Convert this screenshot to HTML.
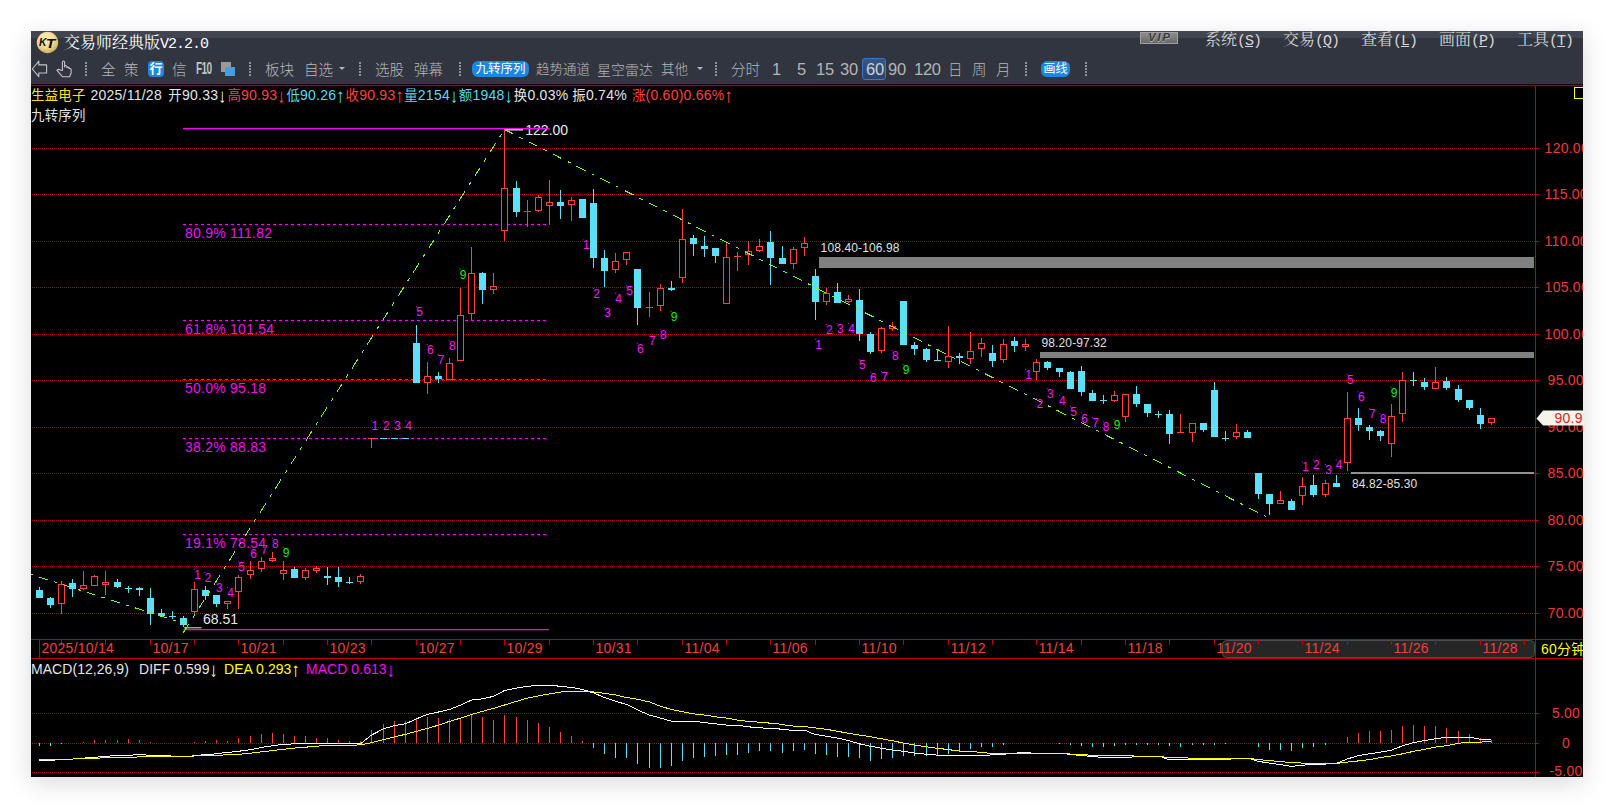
<!DOCTYPE html>
<html lang="zh"><head><meta charset="utf-8"><title>交易师经典版V2.2.0</title>
<style>
html,body{margin:0;padding:0;background:#fff;}
body{width:1614px;height:808px;overflow:hidden;position:relative;font-family:"Liberation Sans","Noto Sans CJK SC",sans-serif;}
#win{position:absolute;left:31px;top:31px;width:1552px;height:746px;background:#000;overflow:hidden;box-shadow:0 6px 24px rgba(0,0,0,.15);}
#title{position:absolute;left:0;top:0;width:100%;height:23px;background:#31353f;}
#title .strip{position:absolute;left:0;top:0;width:100%;height:7px;background:#41454f;}
#tool{position:absolute;left:0;top:23px;width:100%;height:31px;background:#31353f;border-bottom:1px solid #0c0c12;box-sizing:border-box;}
.t{position:absolute;white-space:nowrap;color:#b8b8bc;font-weight:300;font-size:14.5px;line-height:16px;top:31px;}
.n{position:absolute;white-space:nowrap;color:#b4b4b8;font-size:16.5px;letter-spacing:-0.3px;line-height:16px;top:30px;}
.sep{position:absolute;top:31px;width:2px;height:14px;background:repeating-linear-gradient(to bottom,#90909a 0,#90909a 2px,transparent 2px,transparent 3px);}
.pill{position:absolute;background:#1c86e0;border-radius:6px;color:#fff;text-align:center;white-space:nowrap;}
.menu{position:absolute;top:2px;font-family:"Liberation Mono","Noto Serif CJK SC",serif;font-size:16px;line-height:17px;color:#d6d6d6;white-space:nowrap;}
.menu span{font-size:15px;letter-spacing:-1px;}
.menu u{text-decoration:underline;text-underline-offset:1px;}
svg{position:absolute;left:-31px;top:-31px;}
</style></head><body>
<div id="win">
<svg width="1614" height="808" viewBox="0 0 1614 808">
<line x1="32" y1="148.5" x2="1535" y2="148.5" stroke="#c00000" stroke-width="1" stroke-dasharray="1 1"/>
<line x1="32" y1="194.5" x2="1535" y2="194.5" stroke="#c00000" stroke-width="1" stroke-dasharray="1 1"/>
<line x1="32" y1="241.5" x2="1535" y2="241.5" stroke="#c00000" stroke-width="1" stroke-dasharray="1 1"/>
<line x1="32" y1="287.5" x2="1535" y2="287.5" stroke="#c00000" stroke-width="1" stroke-dasharray="1 1"/>
<line x1="32" y1="334.5" x2="1535" y2="334.5" stroke="#c00000" stroke-width="1" stroke-dasharray="1 1"/>
<line x1="32" y1="380.5" x2="1535" y2="380.5" stroke="#c00000" stroke-width="1" stroke-dasharray="1 1"/>
<line x1="32" y1="427.5" x2="1535" y2="427.5" stroke="#c00000" stroke-width="1" stroke-dasharray="1 1"/>
<line x1="32" y1="473.5" x2="1535" y2="473.5" stroke="#c00000" stroke-width="1" stroke-dasharray="1 1"/>
<line x1="32" y1="520.5" x2="1535" y2="520.5" stroke="#c00000" stroke-width="1" stroke-dasharray="1 1"/>
<line x1="32" y1="566.5" x2="1535" y2="566.5" stroke="#c00000" stroke-width="1" stroke-dasharray="1 1"/>
<line x1="32" y1="613.5" x2="1535" y2="613.5" stroke="#c00000" stroke-width="1" stroke-dasharray="1 1"/>
<line x1="32" y1="713.5" x2="1535" y2="713.5" stroke="#c00000" stroke-width="1" stroke-dasharray="1 1"/>
<line x1="32" y1="743.5" x2="1535" y2="743.5" stroke="#c00000" stroke-width="1" stroke-dasharray="1 1"/>
<line x1="32" y1="772.5" x2="1535" y2="772.5" stroke="#c00000" stroke-width="1" stroke-dasharray="1 1"/>
<rect x="819" y="257" width="715" height="11" fill="#808080"/>
<rect x="1040" y="352" width="494" height="6" fill="#808080"/>
<rect x="1351" y="472" width="183" height="2" fill="#909090"/>
<rect x="183.4" y="629" width="365.6" height="1.25" fill="#ff00ff"/>
<line x1="183" y1="224.5" x2="546" y2="224.5" stroke="#ff00ff" stroke-width="1" stroke-dasharray="3 3" shape-rendering="crispEdges"/>
<line x1="183" y1="320.5" x2="546" y2="320.5" stroke="#ff00ff" stroke-width="1" stroke-dasharray="3 3" shape-rendering="crispEdges"/>
<line x1="183" y1="379.5" x2="546" y2="379.5" stroke="#ff00ff" stroke-width="1" stroke-dasharray="3 3" shape-rendering="crispEdges"/>
<line x1="183" y1="438.5" x2="546" y2="438.5" stroke="#ff00ff" stroke-width="1" stroke-dasharray="3 3" shape-rendering="crispEdges"/>
<line x1="183" y1="534.5" x2="546" y2="534.5" stroke="#ff00ff" stroke-width="1" stroke-dasharray="3 3" shape-rendering="crispEdges"/>
<rect x="505" y="129" width="18" height="1.5" fill="#e8e8e8"/>
<rect x="184" y="627.3" width="17.5" height="1" fill="#e8e8e8"/>
<g shape-rendering="crispEdges">
<rect x="39" y="587" width="1" height="11" fill="#5ce0f8"/>
<rect x="36" y="590" width="7" height="8" fill="#5ce0f8"/>
<rect x="50" y="597" width="1" height="11" fill="#5ce0f8"/>
<rect x="47" y="598" width="7" height="7" fill="#5ce0f8"/>
<rect x="61" y="581" width="1" height="3" fill="#ff4040"/>
<rect x="61" y="604" width="1" height="10" fill="#ff4040"/>
<rect x="58.5" y="584.5" width="6" height="19" fill="#000" stroke="#ff4040" stroke-width="1"/>
<rect x="72" y="579" width="1" height="18" fill="#5ce0f8"/>
<rect x="69" y="583" width="7" height="6" fill="#5ce0f8"/>
<rect x="83" y="571" width="1" height="14" fill="#ff4040"/>
<rect x="83" y="589" width="1" height="1" fill="#ff4040"/>
<rect x="80.5" y="585.5" width="6" height="3" fill="#000" stroke="#ff4040" stroke-width="1"/>
<rect x="94" y="575" width="1" height="1" fill="#ff4040"/>
<rect x="91.5" y="576.5" width="6" height="9" fill="#000" stroke="#ff4040" stroke-width="1"/>
<rect x="105" y="571" width="1" height="11" fill="#ff4040"/>
<rect x="105" y="585" width="1" height="10" fill="#ff4040"/>
<rect x="102.5" y="582.5" width="6" height="2" fill="#000" stroke="#ff4040" stroke-width="1"/>
<rect x="117" y="579" width="1" height="9" fill="#5ce0f8"/>
<rect x="114" y="582" width="7" height="5" fill="#5ce0f8"/>
<rect x="128" y="586" width="1" height="7" fill="#5ce0f8"/>
<rect x="125" y="588" width="7" height="1" fill="#5ce0f8"/>
<rect x="139" y="587" width="1" height="9" fill="#5ce0f8"/>
<rect x="136" y="588" width="7" height="2" fill="#5ce0f8"/>
<rect x="150" y="588" width="1" height="37" fill="#5ce0f8"/>
<rect x="147" y="598" width="7" height="16" fill="#5ce0f8"/>
<rect x="161" y="609" width="1" height="7" fill="#5ce0f8"/>
<rect x="158" y="613" width="7" height="3" fill="#5ce0f8"/>
<rect x="172" y="611" width="1" height="8" fill="#5ce0f8"/>
<rect x="169" y="616" width="7" height="1" fill="#5ce0f8"/>
<rect x="183" y="616" width="1" height="11" fill="#5ce0f8"/>
<rect x="180" y="618" width="7" height="7" fill="#5ce0f8"/>
<rect x="194" y="582" width="1" height="7" fill="#ff4040"/>
<rect x="194" y="612" width="1" height="4" fill="#ff4040"/>
<rect x="191.5" y="589.5" width="6" height="22" fill="#000" stroke="#ff4040" stroke-width="1"/>
<rect x="205" y="586" width="1" height="14" fill="#5ce0f8"/>
<rect x="202" y="590" width="7" height="6" fill="#5ce0f8"/>
<rect x="216" y="595" width="1" height="12" fill="#5ce0f8"/>
<rect x="213" y="595" width="7" height="9" fill="#5ce0f8"/>
<rect x="227" y="604" width="1" height="5" fill="#ff4040"/>
<rect x="224.5" y="601.5" width="6" height="2" fill="#000" stroke="#ff4040" stroke-width="1"/>
<rect x="238" y="575" width="1" height="2" fill="#ff4040"/>
<rect x="238" y="592" width="1" height="17" fill="#ff4040"/>
<rect x="235.5" y="577.5" width="6" height="14" fill="#000" stroke="#ff4040" stroke-width="1"/>
<rect x="250" y="561" width="1" height="9" fill="#ff4040"/>
<rect x="250" y="575" width="1" height="4" fill="#ff4040"/>
<rect x="247.5" y="570.5" width="6" height="4" fill="#000" stroke="#ff4040" stroke-width="1"/>
<rect x="261" y="557" width="1" height="4" fill="#ff4040"/>
<rect x="261" y="569" width="1" height="3" fill="#ff4040"/>
<rect x="258.5" y="561.5" width="6" height="7" fill="#000" stroke="#ff4040" stroke-width="1"/>
<rect x="272" y="552" width="1" height="6" fill="#ff4040"/>
<rect x="272" y="561" width="1" height="1" fill="#ff4040"/>
<rect x="269.5" y="558.5" width="6" height="2" fill="#000" stroke="#ff4040" stroke-width="1"/>
<rect x="283" y="561" width="1" height="9" fill="#ff4040"/>
<rect x="283" y="574" width="1" height="6" fill="#ff4040"/>
<rect x="280.5" y="570.5" width="6" height="3" fill="#000" stroke="#ff4040" stroke-width="1"/>
<rect x="294" y="567" width="1" height="11" fill="#5ce0f8"/>
<rect x="291" y="569" width="7" height="9" fill="#5ce0f8"/>
<rect x="305" y="568" width="1" height="2" fill="#ff4040"/>
<rect x="305" y="578" width="1" height="2" fill="#ff4040"/>
<rect x="302.5" y="570.5" width="6" height="7" fill="#000" stroke="#ff4040" stroke-width="1"/>
<rect x="316" y="566" width="1" height="2" fill="#ff4040"/>
<rect x="316" y="571" width="1" height="2" fill="#ff4040"/>
<rect x="313.5" y="568.5" width="6" height="2" fill="#000" stroke="#ff4040" stroke-width="1"/>
<rect x="327" y="567" width="1" height="18" fill="#5ce0f8"/>
<rect x="324" y="576" width="7" height="2" fill="#5ce0f8"/>
<rect x="338" y="567" width="1" height="20" fill="#5ce0f8"/>
<rect x="335" y="577" width="7" height="5" fill="#5ce0f8"/>
<rect x="349" y="577" width="1" height="7" fill="#5ce0f8"/>
<rect x="346" y="582" width="7" height="1" fill="#5ce0f8"/>
<rect x="360" y="574" width="1" height="2" fill="#ff4040"/>
<rect x="360" y="582" width="1" height="2" fill="#ff4040"/>
<rect x="357.5" y="576.5" width="6" height="5" fill="#000" stroke="#ff4040" stroke-width="1"/>
<rect x="371" y="438" width="1" height="10" fill="#ff4040"/>
<rect x="368" y="438" width="7" height="1" fill="#ff4040"/>
<rect x="380" y="438" width="7" height="1" fill="#5ce0f8"/>
<rect x="391" y="438" width="7" height="1" fill="#5ce0f8"/>
<rect x="402" y="438" width="7" height="1" fill="#5ce0f8"/>
<rect x="416" y="325" width="1" height="58" fill="#5ce0f8"/>
<rect x="413" y="343" width="7" height="40" fill="#5ce0f8"/>
<rect x="427" y="362" width="1" height="14" fill="#ff4040"/>
<rect x="427" y="383" width="1" height="11" fill="#ff4040"/>
<rect x="424.5" y="376.5" width="6" height="6" fill="#000" stroke="#ff4040" stroke-width="1"/>
<rect x="438" y="372" width="1" height="11" fill="#5ce0f8"/>
<rect x="435" y="376" width="7" height="3" fill="#5ce0f8"/>
<rect x="449" y="358" width="1" height="5" fill="#ff4040"/>
<rect x="446.5" y="363.5" width="6" height="16" fill="#000" stroke="#ff4040" stroke-width="1"/>
<rect x="460" y="288" width="1" height="27" fill="#ff4040"/>
<rect x="457.5" y="315.5" width="6" height="45" fill="#000" stroke="#ff4040" stroke-width="1"/>
<rect x="471" y="247" width="1" height="26" fill="#ff4040"/>
<rect x="471" y="314" width="1" height="6" fill="#ff4040"/>
<rect x="468.5" y="273.5" width="6" height="40" fill="#000" stroke="#ff4040" stroke-width="1"/>
<rect x="482" y="272" width="1" height="32" fill="#5ce0f8"/>
<rect x="479" y="273" width="7" height="17" fill="#5ce0f8"/>
<rect x="493" y="273" width="1" height="13" fill="#ff4040"/>
<rect x="493" y="290" width="1" height="4" fill="#ff4040"/>
<rect x="490.5" y="286.5" width="6" height="3" fill="#000" stroke="#ff4040" stroke-width="1"/>
<rect x="504" y="129" width="1" height="59" fill="#ff4040"/>
<rect x="504" y="231" width="1" height="10" fill="#ff4040"/>
<rect x="501.5" y="188.5" width="6" height="42" fill="#000" stroke="#ff4040" stroke-width="1"/>
<rect x="516" y="181" width="1" height="36" fill="#5ce0f8"/>
<rect x="513" y="188" width="7" height="24" fill="#5ce0f8"/>
<rect x="527" y="200" width="1" height="27" fill="#ff4040"/>
<rect x="524" y="211" width="7" height="1" fill="#ff4040"/>
<rect x="538" y="195" width="1" height="2" fill="#ff4040"/>
<rect x="538" y="211" width="1" height="1" fill="#ff4040"/>
<rect x="535.5" y="197.5" width="6" height="13" fill="#000" stroke="#ff4040" stroke-width="1"/>
<rect x="549" y="180" width="1" height="22" fill="#ff4040"/>
<rect x="549" y="206" width="1" height="19" fill="#ff4040"/>
<rect x="546.5" y="202.5" width="6" height="3" fill="#000" stroke="#ff4040" stroke-width="1"/>
<rect x="560" y="190" width="1" height="29" fill="#5ce0f8"/>
<rect x="557" y="202" width="7" height="4" fill="#5ce0f8"/>
<rect x="571" y="197" width="1" height="3" fill="#ff4040"/>
<rect x="571" y="205" width="1" height="16" fill="#ff4040"/>
<rect x="568.5" y="200.5" width="6" height="4" fill="#000" stroke="#ff4040" stroke-width="1"/>
<rect x="579" y="199" width="7" height="19" fill="#5ce0f8"/>
<rect x="593" y="189" width="1" height="79" fill="#5ce0f8"/>
<rect x="590" y="203" width="7" height="55" fill="#5ce0f8"/>
<rect x="604" y="250" width="1" height="37" fill="#5ce0f8"/>
<rect x="601" y="258" width="7" height="13" fill="#5ce0f8"/>
<rect x="615" y="253" width="1" height="8" fill="#ff4040"/>
<rect x="615" y="270" width="1" height="3" fill="#ff4040"/>
<rect x="612.5" y="261.5" width="6" height="8" fill="#000" stroke="#ff4040" stroke-width="1"/>
<rect x="626" y="260" width="1" height="5" fill="#ff4040"/>
<rect x="623.5" y="252.5" width="6" height="7" fill="#000" stroke="#ff4040" stroke-width="1"/>
<rect x="637" y="269" width="1" height="56" fill="#5ce0f8"/>
<rect x="634" y="269" width="7" height="39" fill="#5ce0f8"/>
<rect x="649" y="292" width="1" height="25" fill="#ff4040"/>
<rect x="646" y="307" width="7" height="1" fill="#ff4040"/>
<rect x="660" y="284" width="1" height="4" fill="#ff4040"/>
<rect x="660" y="306" width="1" height="5" fill="#ff4040"/>
<rect x="657.5" y="288.5" width="6" height="17" fill="#000" stroke="#ff4040" stroke-width="1"/>
<rect x="671" y="281" width="1" height="10" fill="#5ce0f8"/>
<rect x="668" y="288" width="7" height="2" fill="#5ce0f8"/>
<rect x="682" y="209" width="1" height="30" fill="#ff4040"/>
<rect x="682" y="278" width="1" height="5" fill="#ff4040"/>
<rect x="679.5" y="239.5" width="6" height="38" fill="#000" stroke="#ff4040" stroke-width="1"/>
<rect x="693" y="235" width="1" height="21" fill="#5ce0f8"/>
<rect x="690" y="238" width="7" height="6" fill="#5ce0f8"/>
<rect x="704" y="236" width="1" height="21" fill="#5ce0f8"/>
<rect x="701" y="246" width="7" height="3" fill="#5ce0f8"/>
<rect x="715" y="248" width="1" height="15" fill="#5ce0f8"/>
<rect x="712" y="248" width="7" height="8" fill="#5ce0f8"/>
<rect x="726" y="243" width="1" height="14" fill="#ff4040"/>
<rect x="723.5" y="257.5" width="6" height="46" fill="#000" stroke="#ff4040" stroke-width="1"/>
<rect x="737" y="252" width="1" height="19" fill="#ff4040"/>
<rect x="734" y="256" width="7" height="1" fill="#ff4040"/>
<rect x="748" y="241" width="1" height="10" fill="#ff4040"/>
<rect x="748" y="255" width="1" height="10" fill="#ff4040"/>
<rect x="745.5" y="251.5" width="6" height="3" fill="#000" stroke="#ff4040" stroke-width="1"/>
<rect x="759" y="239" width="1" height="7" fill="#ff4040"/>
<rect x="759" y="251" width="1" height="1" fill="#ff4040"/>
<rect x="756.5" y="246.5" width="6" height="4" fill="#000" stroke="#ff4040" stroke-width="1"/>
<rect x="770" y="231" width="1" height="54" fill="#5ce0f8"/>
<rect x="767" y="242" width="7" height="16" fill="#5ce0f8"/>
<rect x="782" y="246" width="1" height="18" fill="#5ce0f8"/>
<rect x="779" y="258" width="7" height="6" fill="#5ce0f8"/>
<rect x="793" y="247" width="1" height="2" fill="#ff4040"/>
<rect x="793" y="264" width="1" height="5" fill="#ff4040"/>
<rect x="790.5" y="249.5" width="6" height="14" fill="#000" stroke="#ff4040" stroke-width="1"/>
<rect x="804" y="237" width="1" height="6" fill="#ff4040"/>
<rect x="804" y="248" width="1" height="8" fill="#ff4040"/>
<rect x="801.5" y="243.5" width="6" height="4" fill="#000" stroke="#ff4040" stroke-width="1"/>
<rect x="815" y="269" width="1" height="51" fill="#5ce0f8"/>
<rect x="812" y="276" width="7" height="26" fill="#5ce0f8"/>
<rect x="826" y="288" width="1" height="5" fill="#ff4040"/>
<rect x="826" y="302" width="1" height="3" fill="#ff4040"/>
<rect x="823.5" y="293.5" width="6" height="8" fill="#000" stroke="#ff4040" stroke-width="1"/>
<rect x="837" y="283" width="1" height="20" fill="#5ce0f8"/>
<rect x="834" y="292" width="7" height="11" fill="#5ce0f8"/>
<rect x="848" y="295" width="1" height="4" fill="#ff4040"/>
<rect x="848" y="302" width="1" height="1" fill="#ff4040"/>
<rect x="845.5" y="299.5" width="6" height="2" fill="#000" stroke="#ff4040" stroke-width="1"/>
<rect x="859" y="289" width="1" height="52" fill="#5ce0f8"/>
<rect x="856" y="300" width="7" height="34" fill="#5ce0f8"/>
<rect x="870" y="332" width="1" height="22" fill="#5ce0f8"/>
<rect x="867" y="334" width="7" height="18" fill="#5ce0f8"/>
<rect x="881" y="327" width="1" height="1" fill="#ff4040"/>
<rect x="881" y="351" width="1" height="2" fill="#ff4040"/>
<rect x="878.5" y="328.5" width="6" height="22" fill="#000" stroke="#ff4040" stroke-width="1"/>
<rect x="892" y="322" width="1" height="4" fill="#ff4040"/>
<rect x="892" y="329" width="1" height="2" fill="#ff4040"/>
<rect x="889.5" y="326.5" width="6" height="2" fill="#000" stroke="#ff4040" stroke-width="1"/>
<rect x="900" y="301" width="7" height="44" fill="#5ce0f8"/>
<rect x="914" y="342" width="1" height="13" fill="#5ce0f8"/>
<rect x="911" y="345" width="7" height="4" fill="#5ce0f8"/>
<rect x="926" y="348" width="1" height="14" fill="#5ce0f8"/>
<rect x="923" y="349" width="7" height="11" fill="#5ce0f8"/>
<rect x="937" y="349" width="1" height="11" fill="#5ce0f8"/>
<rect x="934" y="360" width="7" height="1" fill="#5ce0f8"/>
<rect x="948" y="326" width="1" height="30" fill="#ff4040"/>
<rect x="948" y="362" width="1" height="6" fill="#ff4040"/>
<rect x="945.5" y="356.5" width="6" height="5" fill="#000" stroke="#ff4040" stroke-width="1"/>
<rect x="959" y="353" width="1" height="11" fill="#5ce0f8"/>
<rect x="956" y="356" width="7" height="2" fill="#5ce0f8"/>
<rect x="970" y="332" width="1" height="19" fill="#ff4040"/>
<rect x="970" y="359" width="1" height="5" fill="#ff4040"/>
<rect x="967.5" y="351.5" width="6" height="7" fill="#000" stroke="#ff4040" stroke-width="1"/>
<rect x="981" y="338" width="1" height="5" fill="#ff4040"/>
<rect x="981" y="349" width="1" height="8" fill="#ff4040"/>
<rect x="978.5" y="343.5" width="6" height="5" fill="#000" stroke="#ff4040" stroke-width="1"/>
<rect x="992" y="345" width="1" height="22" fill="#5ce0f8"/>
<rect x="989" y="353" width="7" height="8" fill="#5ce0f8"/>
<rect x="1003" y="339" width="1" height="5" fill="#ff4040"/>
<rect x="1003" y="360" width="1" height="3" fill="#ff4040"/>
<rect x="1000.5" y="344.5" width="6" height="15" fill="#000" stroke="#ff4040" stroke-width="1"/>
<rect x="1014" y="337" width="1" height="15" fill="#5ce0f8"/>
<rect x="1011" y="341" width="7" height="5" fill="#5ce0f8"/>
<rect x="1025" y="339" width="1" height="5" fill="#ff4040"/>
<rect x="1025" y="347" width="1" height="4" fill="#ff4040"/>
<rect x="1022.5" y="344.5" width="6" height="2" fill="#000" stroke="#ff4040" stroke-width="1"/>
<rect x="1036" y="359" width="1" height="3" fill="#ff4040"/>
<rect x="1036" y="372" width="1" height="8" fill="#ff4040"/>
<rect x="1033.5" y="362.5" width="6" height="9" fill="#000" stroke="#ff4040" stroke-width="1"/>
<rect x="1047" y="361" width="1" height="9" fill="#5ce0f8"/>
<rect x="1044" y="362" width="7" height="6" fill="#5ce0f8"/>
<rect x="1059" y="368" width="1" height="9" fill="#5ce0f8"/>
<rect x="1056" y="368" width="7" height="4" fill="#5ce0f8"/>
<rect x="1070" y="371" width="1" height="18" fill="#5ce0f8"/>
<rect x="1067" y="372" width="7" height="17" fill="#5ce0f8"/>
<rect x="1081" y="366" width="1" height="30" fill="#5ce0f8"/>
<rect x="1078" y="371" width="7" height="21" fill="#5ce0f8"/>
<rect x="1092" y="390" width="1" height="11" fill="#5ce0f8"/>
<rect x="1089" y="393" width="7" height="8" fill="#5ce0f8"/>
<rect x="1103" y="395" width="1" height="9" fill="#5ce0f8"/>
<rect x="1100" y="400" width="7" height="1" fill="#5ce0f8"/>
<rect x="1114" y="391" width="1" height="4" fill="#ff4040"/>
<rect x="1114" y="401" width="1" height="1" fill="#ff4040"/>
<rect x="1111.5" y="395.5" width="6" height="5" fill="#000" stroke="#ff4040" stroke-width="1"/>
<rect x="1125" y="417" width="1" height="5" fill="#ff4040"/>
<rect x="1122.5" y="394.5" width="6" height="22" fill="#000" stroke="#ff4040" stroke-width="1"/>
<rect x="1136" y="386" width="1" height="21" fill="#5ce0f8"/>
<rect x="1133" y="394" width="7" height="10" fill="#5ce0f8"/>
<rect x="1147" y="404" width="1" height="13" fill="#5ce0f8"/>
<rect x="1144" y="404" width="7" height="9" fill="#5ce0f8"/>
<rect x="1158" y="411" width="1" height="7" fill="#5ce0f8"/>
<rect x="1155" y="414" width="7" height="1" fill="#5ce0f8"/>
<rect x="1169" y="410" width="1" height="34" fill="#5ce0f8"/>
<rect x="1166" y="414" width="7" height="20" fill="#5ce0f8"/>
<rect x="1180" y="414" width="1" height="18" fill="#ff4040"/>
<rect x="1177" y="432" width="7" height="1" fill="#ff4040"/>
<rect x="1192" y="433" width="1" height="9" fill="#ff4040"/>
<rect x="1189.5" y="423.5" width="6" height="9" fill="#000" stroke="#ff4040" stroke-width="1"/>
<rect x="1203" y="423" width="1" height="9" fill="#5ce0f8"/>
<rect x="1200" y="423" width="7" height="7" fill="#5ce0f8"/>
<rect x="1214" y="382" width="1" height="55" fill="#5ce0f8"/>
<rect x="1211" y="390" width="7" height="47" fill="#5ce0f8"/>
<rect x="1225" y="431" width="1" height="10" fill="#5ce0f8"/>
<rect x="1222" y="438" width="7" height="1" fill="#5ce0f8"/>
<rect x="1236" y="424" width="1" height="8" fill="#ff4040"/>
<rect x="1236" y="437" width="1" height="2" fill="#ff4040"/>
<rect x="1233.5" y="432.5" width="6" height="4" fill="#000" stroke="#ff4040" stroke-width="1"/>
<rect x="1247" y="430" width="1" height="8" fill="#5ce0f8"/>
<rect x="1244" y="432" width="7" height="6" fill="#5ce0f8"/>
<rect x="1258" y="473" width="1" height="26" fill="#5ce0f8"/>
<rect x="1255" y="473" width="7" height="21" fill="#5ce0f8"/>
<rect x="1269" y="494" width="1" height="21" fill="#5ce0f8"/>
<rect x="1266" y="494" width="7" height="10" fill="#5ce0f8"/>
<rect x="1280" y="491" width="1" height="9" fill="#ff4040"/>
<rect x="1277.5" y="500.5" width="6" height="3" fill="#000" stroke="#ff4040" stroke-width="1"/>
<rect x="1291" y="499" width="1" height="11" fill="#5ce0f8"/>
<rect x="1288" y="501" width="7" height="9" fill="#5ce0f8"/>
<rect x="1302" y="477" width="1" height="9" fill="#ff4040"/>
<rect x="1302" y="496" width="1" height="9" fill="#ff4040"/>
<rect x="1299.5" y="486.5" width="6" height="9" fill="#000" stroke="#ff4040" stroke-width="1"/>
<rect x="1313" y="475" width="1" height="22" fill="#5ce0f8"/>
<rect x="1310" y="485" width="7" height="10" fill="#5ce0f8"/>
<rect x="1325" y="480" width="1" height="3" fill="#ff4040"/>
<rect x="1325" y="495" width="1" height="2" fill="#ff4040"/>
<rect x="1322.5" y="483.5" width="6" height="11" fill="#000" stroke="#ff4040" stroke-width="1"/>
<rect x="1336" y="475" width="1" height="12" fill="#5ce0f8"/>
<rect x="1333" y="483" width="7" height="4" fill="#5ce0f8"/>
<rect x="1347" y="392" width="1" height="26" fill="#ff4040"/>
<rect x="1347" y="463" width="1" height="8" fill="#ff4040"/>
<rect x="1344.5" y="418.5" width="6" height="44" fill="#000" stroke="#ff4040" stroke-width="1"/>
<rect x="1358" y="408" width="1" height="23" fill="#5ce0f8"/>
<rect x="1355" y="418" width="7" height="7" fill="#5ce0f8"/>
<rect x="1369" y="425" width="1" height="15" fill="#5ce0f8"/>
<rect x="1366" y="427" width="7" height="4" fill="#5ce0f8"/>
<rect x="1380" y="430" width="1" height="11" fill="#5ce0f8"/>
<rect x="1377" y="431" width="7" height="5" fill="#5ce0f8"/>
<rect x="1391" y="404" width="1" height="12" fill="#ff4040"/>
<rect x="1391" y="444" width="1" height="13" fill="#ff4040"/>
<rect x="1388.5" y="416.5" width="6" height="27" fill="#000" stroke="#ff4040" stroke-width="1"/>
<rect x="1402" y="372" width="1" height="8" fill="#ff4040"/>
<rect x="1402" y="414" width="1" height="8" fill="#ff4040"/>
<rect x="1399.5" y="380.5" width="6" height="33" fill="#000" stroke="#ff4040" stroke-width="1"/>
<rect x="1413" y="372" width="1" height="14" fill="#5ce0f8"/>
<rect x="1410" y="380" width="7" height="1" fill="#5ce0f8"/>
<rect x="1424" y="378" width="1" height="12" fill="#5ce0f8"/>
<rect x="1421" y="382" width="7" height="5" fill="#5ce0f8"/>
<rect x="1435" y="367" width="1" height="15" fill="#ff4040"/>
<rect x="1432.5" y="382.5" width="6" height="6" fill="#000" stroke="#ff4040" stroke-width="1"/>
<rect x="1446" y="377" width="1" height="13" fill="#5ce0f8"/>
<rect x="1443" y="381" width="7" height="7" fill="#5ce0f8"/>
<rect x="1458" y="385" width="1" height="17" fill="#5ce0f8"/>
<rect x="1455" y="389" width="7" height="11" fill="#5ce0f8"/>
<rect x="1469" y="400" width="1" height="10" fill="#5ce0f8"/>
<rect x="1466" y="400" width="7" height="8" fill="#5ce0f8"/>
<rect x="1480" y="408" width="1" height="21" fill="#5ce0f8"/>
<rect x="1477" y="415" width="7" height="9" fill="#5ce0f8"/>
<rect x="1491" y="423" width="1" height="2" fill="#ff4040"/>
<rect x="1488.5" y="418.5" width="6" height="4" fill="#000" stroke="#ff4040" stroke-width="1"/>
</g>
<line x1="14.62" y1="569.15" x2="183.5" y2="623.4" stroke="#80ff00" stroke-width="1" stroke-dasharray="9.45 6.30 3.15 6.30" stroke-dashoffset="0.00" shape-rendering="crispEdges"/>
<line x1="183.4" y1="632.5" x2="504.5" y2="129.5" stroke="#80ff00" stroke-width="1" stroke-dasharray="10.68 7.12 3.56 7.12" stroke-dashoffset="0.00" shape-rendering="crispEdges"/>
<line x1="504.5" y1="129.5" x2="1266" y2="516.5" stroke="#80ff00" stroke-width="1" stroke-dasharray="10.10 6.73 3.37 6.73" stroke-dashoffset="0.00" shape-rendering="crispEdges"/>
<g shape-rendering="crispEdges">
<rect x="39" y="743.4" width="1" height="2.4" fill="#5ce0f8"/>
<rect x="50" y="743.4" width="1" height="2.4" fill="#5ce0f8"/>
<rect x="61" y="743.4" width="1" height="0.8" fill="#5ce0f8"/>
<rect x="83" y="742.1" width="1" height="1.3" fill="#ff4040"/>
<rect x="94" y="740.1" width="1" height="3.3" fill="#ff4040"/>
<rect x="105" y="740.1" width="1" height="3.3" fill="#ff4040"/>
<rect x="117" y="739.6" width="1" height="3.8" fill="#ff4040"/>
<rect x="128" y="738.9" width="1" height="4.5" fill="#ff4040"/>
<rect x="139" y="740.1" width="1" height="3.3" fill="#ff4040"/>
<rect x="150" y="742.4" width="1" height="1.0" fill="#ff4040"/>
<rect x="161" y="742.9" width="1" height="0.5" fill="#ff4040"/>
<rect x="194" y="742.4" width="1" height="1.0" fill="#ff4040"/>
<rect x="205" y="741.4" width="1" height="2.0" fill="#ff4040"/>
<rect x="216" y="740.1" width="1" height="3.3" fill="#ff4040"/>
<rect x="227" y="740.6" width="1" height="2.8" fill="#ff4040"/>
<rect x="238" y="738.1" width="1" height="5.3" fill="#ff4040"/>
<rect x="250" y="736.4" width="1" height="7.0" fill="#ff4040"/>
<rect x="261" y="734.4" width="1" height="9.0" fill="#ff4040"/>
<rect x="272" y="733.4" width="1" height="10.0" fill="#ff4040"/>
<rect x="283" y="734.4" width="1" height="9.0" fill="#ff4040"/>
<rect x="294" y="735.9" width="1" height="7.5" fill="#ff4040"/>
<rect x="305" y="736.4" width="1" height="7.0" fill="#ff4040"/>
<rect x="316" y="737.6" width="1" height="5.8" fill="#ff4040"/>
<rect x="327" y="738.4" width="1" height="5.0" fill="#ff4040"/>
<rect x="338" y="740.1" width="1" height="3.3" fill="#ff4040"/>
<rect x="349" y="741.4" width="1" height="2.0" fill="#ff4040"/>
<rect x="360" y="741.4" width="1" height="2.0" fill="#ff4040"/>
<rect x="371" y="730.1" width="1" height="13.3" fill="#ff4040"/>
<rect x="383" y="724.4" width="1" height="19.0" fill="#ff4040"/>
<rect x="394" y="721.4" width="1" height="22.0" fill="#ff4040"/>
<rect x="405" y="721.4" width="1" height="22.0" fill="#ff4040"/>
<rect x="416" y="718.1" width="1" height="25.3" fill="#ff4040"/>
<rect x="427" y="717.1" width="1" height="26.3" fill="#ff4040"/>
<rect x="438" y="718.1" width="1" height="25.3" fill="#ff4040"/>
<rect x="449" y="719.4" width="1" height="24.0" fill="#ff4040"/>
<rect x="460" y="718.1" width="1" height="25.3" fill="#ff4040"/>
<rect x="471" y="715.1" width="1" height="28.3" fill="#ff4040"/>
<rect x="482" y="717.1" width="1" height="26.3" fill="#ff4040"/>
<rect x="493" y="720.1" width="1" height="23.3" fill="#ff4040"/>
<rect x="504" y="715.1" width="1" height="28.3" fill="#ff4040"/>
<rect x="516" y="717.1" width="1" height="26.3" fill="#ff4040"/>
<rect x="527" y="720.1" width="1" height="23.3" fill="#ff4040"/>
<rect x="538" y="723.1" width="1" height="20.3" fill="#ff4040"/>
<rect x="549" y="727.1" width="1" height="16.3" fill="#ff4040"/>
<rect x="560" y="732.1" width="1" height="11.3" fill="#ff4040"/>
<rect x="571" y="735.9" width="1" height="7.5" fill="#ff4040"/>
<rect x="582" y="741.4" width="1" height="2.0" fill="#ff4040"/>
<rect x="593" y="743.4" width="1" height="4.3" fill="#5ce0f8"/>
<rect x="604" y="743.4" width="1" height="10.5" fill="#5ce0f8"/>
<rect x="615" y="743.4" width="1" height="14.3" fill="#5ce0f8"/>
<rect x="626" y="743.4" width="1" height="15.0" fill="#5ce0f8"/>
<rect x="637" y="743.4" width="1" height="21.0" fill="#5ce0f8"/>
<rect x="649" y="743.4" width="1" height="24.3" fill="#5ce0f8"/>
<rect x="660" y="743.4" width="1" height="24.3" fill="#5ce0f8"/>
<rect x="671" y="743.4" width="1" height="23.0" fill="#5ce0f8"/>
<rect x="682" y="743.4" width="1" height="18.0" fill="#5ce0f8"/>
<rect x="693" y="743.4" width="1" height="15.0" fill="#5ce0f8"/>
<rect x="704" y="743.4" width="1" height="13.5" fill="#5ce0f8"/>
<rect x="715" y="743.4" width="1" height="12.3" fill="#5ce0f8"/>
<rect x="726" y="743.4" width="1" height="11.3" fill="#5ce0f8"/>
<rect x="737" y="743.4" width="1" height="11.3" fill="#5ce0f8"/>
<rect x="748" y="743.4" width="1" height="9.3" fill="#5ce0f8"/>
<rect x="759" y="743.4" width="1" height="8.0" fill="#5ce0f8"/>
<rect x="770" y="743.4" width="1" height="8.0" fill="#5ce0f8"/>
<rect x="782" y="743.4" width="1" height="9.3" fill="#5ce0f8"/>
<rect x="793" y="743.4" width="1" height="8.0" fill="#5ce0f8"/>
<rect x="804" y="743.4" width="1" height="6.3" fill="#5ce0f8"/>
<rect x="815" y="743.4" width="1" height="10.5" fill="#5ce0f8"/>
<rect x="826" y="743.4" width="1" height="11.3" fill="#5ce0f8"/>
<rect x="837" y="743.4" width="1" height="13.5" fill="#5ce0f8"/>
<rect x="848" y="743.4" width="1" height="13.5" fill="#5ce0f8"/>
<rect x="859" y="743.4" width="1" height="15.0" fill="#5ce0f8"/>
<rect x="870" y="743.4" width="1" height="17.3" fill="#5ce0f8"/>
<rect x="881" y="743.4" width="1" height="16.0" fill="#5ce0f8"/>
<rect x="892" y="743.4" width="1" height="14.3" fill="#5ce0f8"/>
<rect x="903" y="743.4" width="1" height="13.0" fill="#5ce0f8"/>
<rect x="914" y="743.4" width="1" height="13.0" fill="#5ce0f8"/>
<rect x="926" y="743.4" width="1" height="12.3" fill="#5ce0f8"/>
<rect x="937" y="743.4" width="1" height="12.3" fill="#5ce0f8"/>
<rect x="948" y="743.4" width="1" height="10.5" fill="#5ce0f8"/>
<rect x="959" y="743.4" width="1" height="8.0" fill="#5ce0f8"/>
<rect x="970" y="743.4" width="1" height="6.0" fill="#5ce0f8"/>
<rect x="981" y="743.4" width="1" height="3.5" fill="#5ce0f8"/>
<rect x="992" y="743.4" width="1" height="3.5" fill="#5ce0f8"/>
<rect x="1003" y="743.4" width="1" height="1.3" fill="#5ce0f8"/>
<rect x="1025" y="742.8" width="1" height="0.6" fill="#ff4040"/>
<rect x="1059" y="743.4" width="1" height="1.0" fill="#5ce0f8"/>
<rect x="1070" y="743.4" width="1" height="1.3" fill="#5ce0f8"/>
<rect x="1081" y="743.4" width="1" height="2.3" fill="#5ce0f8"/>
<rect x="1092" y="743.4" width="1" height="3.5" fill="#5ce0f8"/>
<rect x="1103" y="743.4" width="1" height="3.5" fill="#5ce0f8"/>
<rect x="1114" y="743.4" width="1" height="2.3" fill="#5ce0f8"/>
<rect x="1125" y="743.4" width="1" height="1.3" fill="#5ce0f8"/>
<rect x="1136" y="743.4" width="1" height="1.3" fill="#5ce0f8"/>
<rect x="1147" y="743.4" width="1" height="1.3" fill="#5ce0f8"/>
<rect x="1158" y="743.4" width="1" height="1.3" fill="#5ce0f8"/>
<rect x="1169" y="743.4" width="1" height="2.3" fill="#5ce0f8"/>
<rect x="1180" y="743.4" width="1" height="3.5" fill="#5ce0f8"/>
<rect x="1192" y="743.4" width="1" height="1.8" fill="#5ce0f8"/>
<rect x="1203" y="743.4" width="1" height="1.8" fill="#5ce0f8"/>
<rect x="1214" y="743.4" width="1" height="1.3" fill="#5ce0f8"/>
<rect x="1225" y="743.4" width="1" height="0.5" fill="#5ce0f8"/>
<rect x="1258" y="743.4" width="1" height="3.5" fill="#5ce0f8"/>
<rect x="1269" y="743.4" width="1" height="6.3" fill="#5ce0f8"/>
<rect x="1280" y="743.4" width="1" height="6.3" fill="#5ce0f8"/>
<rect x="1291" y="743.4" width="1" height="7.5" fill="#5ce0f8"/>
<rect x="1302" y="743.4" width="1" height="4.8" fill="#5ce0f8"/>
<rect x="1313" y="743.4" width="1" height="3.5" fill="#5ce0f8"/>
<rect x="1325" y="743.4" width="1" height="1.3" fill="#5ce0f8"/>
<rect x="1347" y="737.1" width="1" height="6.3" fill="#ff4040"/>
<rect x="1358" y="733.1" width="1" height="10.3" fill="#ff4040"/>
<rect x="1369" y="730.9" width="1" height="12.5" fill="#ff4040"/>
<rect x="1380" y="730.9" width="1" height="12.5" fill="#ff4040"/>
<rect x="1391" y="730.1" width="1" height="13.3" fill="#ff4040"/>
<rect x="1402" y="725.9" width="1" height="17.5" fill="#ff4040"/>
<rect x="1413" y="725.1" width="1" height="18.3" fill="#ff4040"/>
<rect x="1424" y="725.9" width="1" height="17.5" fill="#ff4040"/>
<rect x="1435" y="725.9" width="1" height="17.5" fill="#ff4040"/>
<rect x="1446" y="728.1" width="1" height="15.3" fill="#ff4040"/>
<rect x="1458" y="730.9" width="1" height="12.5" fill="#ff4040"/>
<rect x="1469" y="733.9" width="1" height="9.5" fill="#ff4040"/>
<rect x="1480" y="738.1" width="1" height="5.3" fill="#ff4040"/>
<rect x="1491" y="739.6" width="1" height="3.8" fill="#ff4040"/>
</g>
<polyline points="38.8,760.1 55.0,760.1 56.3,759.4 77.6,758.9 88.8,757.6 100.1,756.9 111.4,755.9 132.6,755.1 135.1,754.4 145.1,754.4 146.4,755.6 166.4,755.9 188.9,756.4 200.2,755.1 210.2,754.4 221.5,753.1 232.8,751.9 244.0,750.6 255.3,748.8 265.3,746.8 276.6,745.1 287.8,744.3 299.1,743.3 337.9,743.3 340.0,743.1 361.3,743.1 371.5,735.1 383.6,728.8 394.6,725.6 405.6,723.8 416.6,718.8 427.6,714.3 438.6,712.0 449.6,709.5 460.7,705.0 471.7,700.0 482.7,698.8 493.7,696.3 504.5,690.5 516.7,688.0 527.7,686.3 538.7,685.3 549.8,685.3 560.8,686.3 571.8,687.5 582.8,689.5 593.6,693.0 604.6,697.5 615.6,701.3 626.6,704.5 637.6,710.0 649.6,715.1 660.7,718.1 671.7,721.3 682.7,721.3 693.7,721.3 704.7,722.6 715.7,723.8 726.7,725.1 737.7,725.8 740.0,725.6 755.0,727.6 777.5,728.8 790.1,730.1 806.3,730.6 812.6,733.8 826.6,736.3 837.6,738.1 848.6,740.6 859.6,743.8 870.7,746.3 881.7,748.3 892.7,750.1 903.7,751.3 914.7,753.1 926.5,754.3 937.5,755.1 948.5,755.6 975.3,755.6 987.8,755.1 997.8,754.6 1009.1,753.8 1020.4,752.6 1030.4,752.6 1031.6,753.6 1065.4,753.8 1076.7,755.1 1087.9,756.1 1098.9,757.1 1130.5,757.1 1140.0,756.4 1161.3,756.4 1167.5,759.4 1230.1,759.4 1231.4,758.4 1248.9,758.4 1258.6,761.4 1269.7,763.1 1280.7,764.6 1291.7,766.4 1302.7,765.1 1315.2,764.6 1336.5,763.4 1347.5,758.9 1358.5,755.6 1369.5,753.8 1380.6,752.1 1391.6,750.1 1402.6,745.8 1413.6,742.6 1424.6,740.6 1435.6,738.8 1446.6,737.1 1469.4,737.1 1480.4,739.3 1491.4,739.6" fill="none" stroke="#ffffff" stroke-width="1" stroke-linejoin="round" shape-rendering="crispEdges"/>
<polyline points="38.8,759.4 55.0,759.4 77.6,758.9 88.8,758.4 111.4,757.6 132.6,757.1 167.7,756.4 188.9,756.4 200.2,755.6 221.5,755.1 244.0,753.9 255.3,752.6 265.3,751.4 276.6,750.1 287.8,748.8 299.1,747.6 310.4,746.8 321.6,745.8 337.9,745.3 340.0,745.3 355.0,745.3 365.0,744.1 371.5,742.6 383.6,739.6 394.6,736.8 405.6,734.3 416.6,731.3 427.6,728.3 438.6,725.1 449.6,721.3 460.7,718.1 471.7,714.5 482.7,711.3 493.7,708.3 504.5,705.0 516.7,701.3 527.7,698.0 538.7,695.8 549.8,693.8 560.8,692.0 571.8,691.3 582.8,691.3 593.6,692.0 604.6,693.3 615.6,695.0 626.6,697.5 637.6,699.3 649.6,702.0 660.7,706.3 671.7,709.5 682.7,711.8 693.7,713.8 704.7,715.1 715.7,716.8 726.7,718.1 737.7,720.1 740.0,720.6 755.0,721.8 777.5,723.8 790.1,725.8 806.3,726.8 812.6,727.6 826.6,729.3 837.6,731.3 848.6,733.3 859.6,735.1 870.7,736.8 881.7,738.8 892.7,740.8 903.7,743.1 914.7,745.1 926.5,746.8 937.5,748.3 948.5,749.6 959.5,751.1 975.3,751.8 987.8,753.1 1009.1,753.6 1065.4,753.6 1076.7,754.6 1098.9,755.4 1130.5,755.6 1140.0,756.9 1163.8,756.9 1165.0,757.6 1187.6,757.6 1188.8,758.4 1248.9,758.4 1258.6,759.6 1269.7,760.6 1280.7,761.6 1291.7,762.6 1302.7,763.1 1315.2,763.4 1336.5,763.4 1347.5,762.1 1358.5,760.9 1369.5,759.6 1380.6,757.6 1391.6,755.9 1402.6,753.8 1413.6,751.3 1424.6,749.3 1435.6,747.1 1446.6,745.6 1458.4,743.3 1469.4,742.1 1480.4,742.1 1491.4,741.3" fill="none" stroke="#ffff00" stroke-width="1" stroke-linejoin="round" shape-rendering="crispEdges"/>
<g shape-rendering="crispEdges">
<rect x="31" y="85" width="1552" height="1" fill="#a00000"/>
<rect x="31" y="86" width="1552" height="1" fill="#2c0000"/>
<rect x="1535" y="86" width="1" height="691" fill="#c00000"/>
<rect x="31" y="639" width="1552" height="1" fill="#c00000"/>
<rect x="31" y="658" width="1552" height="1" fill="#c00000"/>
<rect x="1536" y="148" width="3" height="1" fill="#c00000"/>
<rect x="1536" y="194" width="3" height="1" fill="#c00000"/>
<rect x="1536" y="241" width="3" height="1" fill="#c00000"/>
<rect x="1536" y="287" width="3" height="1" fill="#c00000"/>
<rect x="1536" y="334" width="3" height="1" fill="#c00000"/>
<rect x="1536" y="380" width="3" height="1" fill="#c00000"/>
<rect x="1536" y="427" width="3" height="1" fill="#c00000"/>
<rect x="1536" y="473" width="3" height="1" fill="#c00000"/>
<rect x="1536" y="520" width="3" height="1" fill="#c00000"/>
<rect x="1536" y="566" width="3" height="1" fill="#c00000"/>
<rect x="1536" y="613" width="3" height="1" fill="#c00000"/>
<rect x="1536" y="713" width="3" height="1" fill="#c00000"/>
<rect x="1536" y="743" width="3" height="1" fill="#c00000"/>
<rect x="1536" y="772" width="3" height="1" fill="#c00000"/>
</g>
<rect x="1222.5" y="640.5" width="312" height="17" rx="4" fill="#262626" stroke="#4c4c4c"/>
<g shape-rendering="crispEdges">
<rect x="39" y="639" width="1" height="19" fill="#c00000"/>
<rect x="61" y="639" width="1" height="6" fill="#c00000"/>
<rect x="105" y="639" width="1" height="6" fill="#c00000"/>
<rect x="150" y="639" width="1" height="6" fill="#c00000"/>
<rect x="194" y="639" width="1" height="6" fill="#c00000"/>
<rect x="238" y="639" width="1" height="6" fill="#c00000"/>
<rect x="283" y="639" width="1" height="6" fill="#c00000"/>
<rect x="327" y="639" width="1" height="6" fill="#c00000"/>
<rect x="371" y="639" width="1" height="6" fill="#c00000"/>
<rect x="416" y="639" width="1" height="6" fill="#c00000"/>
<rect x="460" y="639" width="1" height="6" fill="#c00000"/>
<rect x="504" y="639" width="1" height="6" fill="#c00000"/>
<rect x="549" y="639" width="1" height="6" fill="#c00000"/>
<rect x="593" y="639" width="1" height="6" fill="#c00000"/>
<rect x="637" y="639" width="1" height="6" fill="#c00000"/>
<rect x="682" y="639" width="1" height="6" fill="#c00000"/>
<rect x="726" y="639" width="1" height="6" fill="#c00000"/>
<rect x="770" y="639" width="1" height="6" fill="#c00000"/>
<rect x="815" y="639" width="1" height="6" fill="#c00000"/>
<rect x="859" y="639" width="1" height="6" fill="#c00000"/>
<rect x="903" y="639" width="1" height="6" fill="#c00000"/>
<rect x="948" y="639" width="1" height="6" fill="#c00000"/>
<rect x="992" y="639" width="1" height="6" fill="#c00000"/>
<rect x="1036" y="639" width="1" height="6" fill="#c00000"/>
<rect x="1081" y="639" width="1" height="6" fill="#c00000"/>
<rect x="1125" y="639" width="1" height="6" fill="#c00000"/>
<rect x="1169" y="639" width="1" height="6" fill="#c00000"/>
<rect x="1214" y="639" width="1" height="6" fill="#c00000"/>
<rect x="1258" y="639" width="1" height="6" fill="#c00000"/>
<rect x="1302" y="639" width="1" height="6" fill="#c00000"/>
<rect x="1347" y="639" width="1" height="6" fill="#c00000"/>
<rect x="1391" y="639" width="1" height="6" fill="#c00000"/>
<rect x="1435" y="639" width="1" height="6" fill="#c00000"/>
<rect x="1480" y="639" width="1" height="6" fill="#c00000"/>
<rect x="1524" y="639" width="1" height="6" fill="#c00000"/>
</g>
<text x="41.5" y="652.6" font-family="Liberation Sans, Noto Sans CJK SC, sans-serif" letter-spacing="0.25" font-size="14" fill="#f04040">2025/10/14</text>
<text x="152.5" y="652.6" font-family="Liberation Sans, Noto Sans CJK SC, sans-serif" letter-spacing="0.25" font-size="14" fill="#f04040">10/17</text>
<text x="240.5" y="652.6" font-family="Liberation Sans, Noto Sans CJK SC, sans-serif" letter-spacing="0.25" font-size="14" fill="#f04040">10/21</text>
<text x="329.5" y="652.6" font-family="Liberation Sans, Noto Sans CJK SC, sans-serif" letter-spacing="0.25" font-size="14" fill="#f04040">10/23</text>
<text x="418.5" y="652.6" font-family="Liberation Sans, Noto Sans CJK SC, sans-serif" letter-spacing="0.25" font-size="14" fill="#f04040">10/27</text>
<text x="506.5" y="652.6" font-family="Liberation Sans, Noto Sans CJK SC, sans-serif" letter-spacing="0.25" font-size="14" fill="#f04040">10/29</text>
<text x="595.5" y="652.6" font-family="Liberation Sans, Noto Sans CJK SC, sans-serif" letter-spacing="0.25" font-size="14" fill="#f04040">10/31</text>
<text x="684.5" y="652.6" font-family="Liberation Sans, Noto Sans CJK SC, sans-serif" letter-spacing="0.25" font-size="14" fill="#f04040">11/04</text>
<text x="772.5" y="652.6" font-family="Liberation Sans, Noto Sans CJK SC, sans-serif" letter-spacing="0.25" font-size="14" fill="#f04040">11/06</text>
<text x="861.5" y="652.6" font-family="Liberation Sans, Noto Sans CJK SC, sans-serif" letter-spacing="0.25" font-size="14" fill="#f04040">11/10</text>
<text x="950.5" y="652.6" font-family="Liberation Sans, Noto Sans CJK SC, sans-serif" letter-spacing="0.25" font-size="14" fill="#f04040">11/12</text>
<text x="1038.5" y="652.6" font-family="Liberation Sans, Noto Sans CJK SC, sans-serif" letter-spacing="0.25" font-size="14" fill="#f04040">11/14</text>
<text x="1127.5" y="652.6" font-family="Liberation Sans, Noto Sans CJK SC, sans-serif" letter-spacing="0.25" font-size="14" fill="#f04040">11/18</text>
<text x="1216.5" y="652.6" font-family="Liberation Sans, Noto Sans CJK SC, sans-serif" letter-spacing="0.25" font-size="14" fill="#f04040">11/20</text>
<text x="1304.5" y="652.6" font-family="Liberation Sans, Noto Sans CJK SC, sans-serif" letter-spacing="0.25" font-size="14" fill="#f04040">11/24</text>
<text x="1393.5" y="652.6" font-family="Liberation Sans, Noto Sans CJK SC, sans-serif" letter-spacing="0.25" font-size="14" fill="#f04040">11/26</text>
<text x="1482.5" y="652.6" font-family="Liberation Sans, Noto Sans CJK SC, sans-serif" letter-spacing="0.25" font-size="14" fill="#f04040">11/28</text>
<text x="1544.6" y="152.6" font-family="Liberation Sans, Noto Sans CJK SC, sans-serif" letter-spacing="0.25" font-size="14" fill="#f03838">120.00</text>
<text x="1544.6" y="198.6" font-family="Liberation Sans, Noto Sans CJK SC, sans-serif" letter-spacing="0.25" font-size="14" fill="#f03838">115.00</text>
<text x="1544.6" y="245.6" font-family="Liberation Sans, Noto Sans CJK SC, sans-serif" letter-spacing="0.25" font-size="14" fill="#f03838">110.00</text>
<text x="1544.6" y="291.6" font-family="Liberation Sans, Noto Sans CJK SC, sans-serif" letter-spacing="0.25" font-size="14" fill="#f03838">105.00</text>
<text x="1544.6" y="338.6" font-family="Liberation Sans, Noto Sans CJK SC, sans-serif" letter-spacing="0.25" font-size="14" fill="#f03838">100.00</text>
<text x="1547.6" y="384.6" font-family="Liberation Sans, Noto Sans CJK SC, sans-serif" letter-spacing="0.25" font-size="14" fill="#f03838">95.00</text>
<text x="1547.6" y="431.6" font-family="Liberation Sans, Noto Sans CJK SC, sans-serif" letter-spacing="0.25" font-size="14" fill="#f03838">90.00</text>
<text x="1547.6" y="477.6" font-family="Liberation Sans, Noto Sans CJK SC, sans-serif" letter-spacing="0.25" font-size="14" fill="#f03838">85.00</text>
<text x="1547.6" y="524.6" font-family="Liberation Sans, Noto Sans CJK SC, sans-serif" letter-spacing="0.25" font-size="14" fill="#f03838">80.00</text>
<text x="1547.6" y="570.6" font-family="Liberation Sans, Noto Sans CJK SC, sans-serif" letter-spacing="0.25" font-size="14" fill="#f03838">75.00</text>
<text x="1547.6" y="617.6" font-family="Liberation Sans, Noto Sans CJK SC, sans-serif" letter-spacing="0.25" font-size="14" fill="#f03838">70.00</text>
<text x="1566" y="718.1" text-anchor="middle" font-family="Liberation Sans, Noto Sans CJK SC, sans-serif" letter-spacing="0.25" font-size="14" fill="#f03838">5.00</text>
<text x="1566" y="748.1" text-anchor="middle" font-family="Liberation Sans, Noto Sans CJK SC, sans-serif" letter-spacing="0.25" font-size="14" fill="#f03838">0</text>
<text x="1566" y="775.6" text-anchor="middle" font-family="Liberation Sans, Noto Sans CJK SC, sans-serif" letter-spacing="0.25" font-size="14" fill="#f03838">-5.00</text>
<text x="1541" y="654" font-family="Liberation Sans, Noto Sans CJK SC, sans-serif" letter-spacing="0.25" font-size="14" fill="#ffff00">60分钟</text>
<polygon points="1536.5,418.5 1543,410.5 1583,410.5 1583,425.5 1543,425.5" fill="#f4f4ec"/>
<text x="1554.5" y="423.2" font-family="Liberation Sans, Noto Sans CJK SC, sans-serif" letter-spacing="0.25" font-size="14" fill="#e02020">90.93</text>
<rect x="1574.5" y="87.5" width="12" height="11" fill="none" stroke="#ffff00" stroke-width="1" shape-rendering="crispEdges"/>
<text x="185" y="237.6" font-family="Liberation Sans, Noto Sans CJK SC, sans-serif" letter-spacing="0.25" font-size="14" fill="#f010f0">80.9% 111.82</text>
<text x="185" y="333.6" font-family="Liberation Sans, Noto Sans CJK SC, sans-serif" letter-spacing="0.25" font-size="14" fill="#f010f0">61.8% 101.54</text>
<text x="185" y="392.6" font-family="Liberation Sans, Noto Sans CJK SC, sans-serif" letter-spacing="0.25" font-size="14" fill="#f010f0">50.0% 95.18</text>
<text x="185" y="451.6" font-family="Liberation Sans, Noto Sans CJK SC, sans-serif" letter-spacing="0.25" font-size="14" fill="#f010f0">38.2% 88.83</text>
<text x="185" y="547.6" font-family="Liberation Sans, Noto Sans CJK SC, sans-serif" letter-spacing="0.25" font-size="14" fill="#f010f0">19.1% 78.54</text>
<text x="525.3" y="135.3" font-family="Liberation Sans, Noto Sans CJK SC, sans-serif" font-size="14" fill="#e8e8e8">122.00</text>
<text x="203" y="624.3" font-family="Liberation Sans, Noto Sans CJK SC, sans-serif" font-size="14" fill="#e8e8e8">68.51</text>
<text x="820.6" y="251.8" font-family="Liberation Sans, Noto Sans CJK SC, sans-serif" letter-spacing="0.12" font-size="12" fill="#e0e0e0">108.40-106.98</text>
<text x="1041.5" y="347" font-family="Liberation Sans, Noto Sans CJK SC, sans-serif" letter-spacing="0.12" font-size="12" fill="#e0e0e0">98.20-97.32</text>
<text x="1352" y="488.3" font-family="Liberation Sans, Noto Sans CJK SC, sans-serif" letter-spacing="0.12" font-size="12" fill="#e0e0e0">84.82-85.30</text>
<text x="197.5" y="578.8" text-anchor="middle" font-family="Liberation Sans, Noto Sans CJK SC, sans-serif" font-size="12" fill="#f818f8">1</text>
<rect x="193.9" y="568.8" width="1" height="1" fill="#f818f8" opacity="0.85"/>
<text x="208.1" y="581.9" text-anchor="middle" font-family="Liberation Sans, Noto Sans CJK SC, sans-serif" font-size="12" fill="#f818f8">2</text>
<rect x="204.5" y="571.9" width="1" height="1" fill="#f818f8" opacity="0.85"/>
<text x="219.4" y="591.9" text-anchor="middle" font-family="Liberation Sans, Noto Sans CJK SC, sans-serif" font-size="12" fill="#f818f8">3</text>
<rect x="215.8" y="581.9" width="1" height="1" fill="#f818f8" opacity="0.85"/>
<text x="230.6" y="596.9" text-anchor="middle" font-family="Liberation Sans, Noto Sans CJK SC, sans-serif" font-size="12" fill="#f818f8">4</text>
<rect x="227.0" y="586.9" width="1" height="1" fill="#f818f8" opacity="0.85"/>
<text x="241.5" y="571.3" text-anchor="middle" font-family="Liberation Sans, Noto Sans CJK SC, sans-serif" font-size="12" fill="#f818f8">5</text>
<rect x="237.9" y="561.3" width="1" height="1" fill="#f818f8" opacity="0.85"/>
<text x="253.5" y="557.5" text-anchor="middle" font-family="Liberation Sans, Noto Sans CJK SC, sans-serif" font-size="12" fill="#f818f8">6</text>
<rect x="249.9" y="547.5" width="1" height="1" fill="#f818f8" opacity="0.85"/>
<text x="264.4" y="553.8" text-anchor="middle" font-family="Liberation Sans, Noto Sans CJK SC, sans-serif" font-size="12" fill="#f818f8">7</text>
<rect x="260.8" y="543.8" width="1" height="1" fill="#f818f8" opacity="0.85"/>
<text x="275.4" y="547.5" text-anchor="middle" font-family="Liberation Sans, Noto Sans CJK SC, sans-serif" font-size="12" fill="#f818f8">8</text>
<rect x="271.8" y="537.5" width="1" height="1" fill="#f818f8" opacity="0.85"/>
<text x="286.2" y="556.9" text-anchor="middle" font-family="Liberation Sans, Noto Sans CJK SC, sans-serif" font-size="12" fill="#10f010">9</text>
<rect x="282.6" y="546.9" width="1" height="1" fill="#10f010" opacity="0.85"/>
<text x="374.8" y="430.4" text-anchor="middle" font-family="Liberation Sans, Noto Sans CJK SC, sans-serif" font-size="12" fill="#f818f8">1</text>
<rect x="371.2" y="420.4" width="1" height="1" fill="#f818f8" opacity="0.85"/>
<text x="386.3" y="430.4" text-anchor="middle" font-family="Liberation Sans, Noto Sans CJK SC, sans-serif" font-size="12" fill="#f818f8">2</text>
<rect x="382.7" y="420.4" width="1" height="1" fill="#f818f8" opacity="0.85"/>
<text x="397.5" y="430.4" text-anchor="middle" font-family="Liberation Sans, Noto Sans CJK SC, sans-serif" font-size="12" fill="#f818f8">3</text>
<rect x="393.9" y="420.4" width="1" height="1" fill="#f818f8" opacity="0.85"/>
<text x="408.7" y="430.4" text-anchor="middle" font-family="Liberation Sans, Noto Sans CJK SC, sans-serif" font-size="12" fill="#f818f8">4</text>
<rect x="405.1" y="420.4" width="1" height="1" fill="#f818f8" opacity="0.85"/>
<text x="419.6" y="316.2" text-anchor="middle" font-family="Liberation Sans, Noto Sans CJK SC, sans-serif" font-size="12" fill="#f818f8">5</text>
<rect x="416.0" y="306.2" width="1" height="1" fill="#f818f8" opacity="0.85"/>
<text x="430.3" y="354.1" text-anchor="middle" font-family="Liberation Sans, Noto Sans CJK SC, sans-serif" font-size="12" fill="#f818f8">6</text>
<rect x="426.7" y="344.1" width="1" height="1" fill="#f818f8" opacity="0.85"/>
<text x="441.2" y="364.0" text-anchor="middle" font-family="Liberation Sans, Noto Sans CJK SC, sans-serif" font-size="12" fill="#f818f8">7</text>
<rect x="437.6" y="354.0" width="1" height="1" fill="#f818f8" opacity="0.85"/>
<text x="452.4" y="350.3" text-anchor="middle" font-family="Liberation Sans, Noto Sans CJK SC, sans-serif" font-size="12" fill="#f818f8">8</text>
<rect x="448.8" y="340.3" width="1" height="1" fill="#f818f8" opacity="0.85"/>
<text x="463.1" y="278.6" text-anchor="middle" font-family="Liberation Sans, Noto Sans CJK SC, sans-serif" font-size="12" fill="#10f010">9</text>
<rect x="459.5" y="268.6" width="1" height="1" fill="#10f010" opacity="0.85"/>
<text x="586.3" y="249.4" text-anchor="middle" font-family="Liberation Sans, Noto Sans CJK SC, sans-serif" font-size="12" fill="#f818f8">1</text>
<rect x="582.7" y="239.4" width="1" height="1" fill="#f818f8" opacity="0.85"/>
<text x="596.7" y="298.0" text-anchor="middle" font-family="Liberation Sans, Noto Sans CJK SC, sans-serif" font-size="12" fill="#f818f8">2</text>
<rect x="593.1" y="288.0" width="1" height="1" fill="#f818f8" opacity="0.85"/>
<text x="607.5" y="317.4" text-anchor="middle" font-family="Liberation Sans, Noto Sans CJK SC, sans-serif" font-size="12" fill="#f818f8">3</text>
<rect x="603.9" y="307.4" width="1" height="1" fill="#f818f8" opacity="0.85"/>
<text x="618.6" y="302.7" text-anchor="middle" font-family="Liberation Sans, Noto Sans CJK SC, sans-serif" font-size="12" fill="#f818f8">4</text>
<rect x="615.0" y="292.7" width="1" height="1" fill="#f818f8" opacity="0.85"/>
<text x="629.6" y="295.2" text-anchor="middle" font-family="Liberation Sans, Noto Sans CJK SC, sans-serif" font-size="12" fill="#f818f8">5</text>
<rect x="626.0" y="285.2" width="1" height="1" fill="#f818f8" opacity="0.85"/>
<text x="640.4" y="352.9" text-anchor="middle" font-family="Liberation Sans, Noto Sans CJK SC, sans-serif" font-size="12" fill="#f818f8">6</text>
<rect x="636.8" y="342.9" width="1" height="1" fill="#f818f8" opacity="0.85"/>
<text x="652.3" y="345.4" text-anchor="middle" font-family="Liberation Sans, Noto Sans CJK SC, sans-serif" font-size="12" fill="#f818f8">7</text>
<rect x="648.7" y="335.4" width="1" height="1" fill="#f818f8" opacity="0.85"/>
<text x="663.3" y="339.4" text-anchor="middle" font-family="Liberation Sans, Noto Sans CJK SC, sans-serif" font-size="12" fill="#f818f8">8</text>
<rect x="659.7" y="329.4" width="1" height="1" fill="#f818f8" opacity="0.85"/>
<text x="674.2" y="320.8" text-anchor="middle" font-family="Liberation Sans, Noto Sans CJK SC, sans-serif" font-size="12" fill="#10f010">9</text>
<rect x="670.6" y="310.8" width="1" height="1" fill="#10f010" opacity="0.85"/>
<text x="818.7" y="348.8" text-anchor="middle" font-family="Liberation Sans, Noto Sans CJK SC, sans-serif" font-size="12" fill="#f818f8">1</text>
<rect x="815.1" y="338.8" width="1" height="1" fill="#f818f8" opacity="0.85"/>
<text x="829.4" y="333.9" text-anchor="middle" font-family="Liberation Sans, Noto Sans CJK SC, sans-serif" font-size="12" fill="#f818f8">2</text>
<rect x="825.8" y="323.9" width="1" height="1" fill="#f818f8" opacity="0.85"/>
<text x="840.3" y="333.1" text-anchor="middle" font-family="Liberation Sans, Noto Sans CJK SC, sans-serif" font-size="12" fill="#f818f8">3</text>
<rect x="836.7" y="323.1" width="1" height="1" fill="#f818f8" opacity="0.85"/>
<text x="851.5" y="333.1" text-anchor="middle" font-family="Liberation Sans, Noto Sans CJK SC, sans-serif" font-size="12" fill="#f818f8">4</text>
<rect x="847.9" y="323.1" width="1" height="1" fill="#f818f8" opacity="0.85"/>
<text x="862.4" y="369.2" text-anchor="middle" font-family="Liberation Sans, Noto Sans CJK SC, sans-serif" font-size="12" fill="#f818f8">5</text>
<rect x="858.8" y="359.2" width="1" height="1" fill="#f818f8" opacity="0.85"/>
<text x="873.4" y="381.9" text-anchor="middle" font-family="Liberation Sans, Noto Sans CJK SC, sans-serif" font-size="12" fill="#f818f8">6</text>
<rect x="869.8" y="371.9" width="1" height="1" fill="#f818f8" opacity="0.85"/>
<text x="884.6" y="381.1" text-anchor="middle" font-family="Liberation Sans, Noto Sans CJK SC, sans-serif" font-size="12" fill="#f818f8">7</text>
<rect x="881.0" y="371.1" width="1" height="1" fill="#f818f8" opacity="0.85"/>
<text x="895.3" y="360.0" text-anchor="middle" font-family="Liberation Sans, Noto Sans CJK SC, sans-serif" font-size="12" fill="#f818f8">8</text>
<rect x="891.7" y="350.0" width="1" height="1" fill="#f818f8" opacity="0.85"/>
<text x="906.2" y="374.2" text-anchor="middle" font-family="Liberation Sans, Noto Sans CJK SC, sans-serif" font-size="12" fill="#10f010">9</text>
<rect x="902.6" y="364.2" width="1" height="1" fill="#10f010" opacity="0.85"/>
<text x="1028.6" y="379.0" text-anchor="middle" font-family="Liberation Sans, Noto Sans CJK SC, sans-serif" font-size="12" fill="#f818f8">1</text>
<rect x="1025.0" y="369.0" width="1" height="1" fill="#f818f8" opacity="0.85"/>
<text x="1039.8" y="408.1" text-anchor="middle" font-family="Liberation Sans, Noto Sans CJK SC, sans-serif" font-size="12" fill="#f818f8">2</text>
<rect x="1036.2" y="398.1" width="1" height="1" fill="#f818f8" opacity="0.85"/>
<text x="1050.4" y="398.2" text-anchor="middle" font-family="Liberation Sans, Noto Sans CJK SC, sans-serif" font-size="12" fill="#f818f8">3</text>
<rect x="1046.8" y="388.2" width="1" height="1" fill="#f818f8" opacity="0.85"/>
<text x="1062.4" y="405.1" text-anchor="middle" font-family="Liberation Sans, Noto Sans CJK SC, sans-serif" font-size="12" fill="#f818f8">4</text>
<rect x="1058.8" y="395.1" width="1" height="1" fill="#f818f8" opacity="0.85"/>
<text x="1073.6" y="415.8" text-anchor="middle" font-family="Liberation Sans, Noto Sans CJK SC, sans-serif" font-size="12" fill="#f818f8">5</text>
<rect x="1070.0" y="405.8" width="1" height="1" fill="#f818f8" opacity="0.85"/>
<text x="1084.5" y="422.6" text-anchor="middle" font-family="Liberation Sans, Noto Sans CJK SC, sans-serif" font-size="12" fill="#f818f8">6</text>
<rect x="1080.9" y="412.6" width="1" height="1" fill="#f818f8" opacity="0.85"/>
<text x="1095.5" y="427.0" text-anchor="middle" font-family="Liberation Sans, Noto Sans CJK SC, sans-serif" font-size="12" fill="#f818f8">7</text>
<rect x="1091.9" y="417.0" width="1" height="1" fill="#f818f8" opacity="0.85"/>
<text x="1106.2" y="431.3" text-anchor="middle" font-family="Liberation Sans, Noto Sans CJK SC, sans-serif" font-size="12" fill="#f818f8">8</text>
<rect x="1102.6" y="421.3" width="1" height="1" fill="#f818f8" opacity="0.85"/>
<text x="1117.1" y="428.8" text-anchor="middle" font-family="Liberation Sans, Noto Sans CJK SC, sans-serif" font-size="12" fill="#10f010">9</text>
<rect x="1113.5" y="418.8" width="1" height="1" fill="#10f010" opacity="0.85"/>
<text x="1305.6" y="471.4" text-anchor="middle" font-family="Liberation Sans, Noto Sans CJK SC, sans-serif" font-size="12" fill="#f818f8">1</text>
<rect x="1302.0" y="461.4" width="1" height="1" fill="#f818f8" opacity="0.85"/>
<text x="1316.3" y="469.4" text-anchor="middle" font-family="Liberation Sans, Noto Sans CJK SC, sans-serif" font-size="12" fill="#f818f8">2</text>
<rect x="1312.7" y="459.4" width="1" height="1" fill="#f818f8" opacity="0.85"/>
<text x="1328.5" y="473.9" text-anchor="middle" font-family="Liberation Sans, Noto Sans CJK SC, sans-serif" font-size="12" fill="#f818f8">3</text>
<rect x="1324.9" y="463.9" width="1" height="1" fill="#f818f8" opacity="0.85"/>
<text x="1339.2" y="469.4" text-anchor="middle" font-family="Liberation Sans, Noto Sans CJK SC, sans-serif" font-size="12" fill="#f818f8">4</text>
<rect x="1335.6" y="459.4" width="1" height="1" fill="#f818f8" opacity="0.85"/>
<text x="1350.3" y="383.8" text-anchor="middle" font-family="Liberation Sans, Noto Sans CJK SC, sans-serif" font-size="12" fill="#f818f8">5</text>
<rect x="1346.7" y="373.8" width="1" height="1" fill="#f818f8" opacity="0.85"/>
<text x="1361.3" y="401.2" text-anchor="middle" font-family="Liberation Sans, Noto Sans CJK SC, sans-serif" font-size="12" fill="#f818f8">6</text>
<rect x="1357.7" y="391.2" width="1" height="1" fill="#f818f8" opacity="0.85"/>
<text x="1372.3" y="417.8" text-anchor="middle" font-family="Liberation Sans, Noto Sans CJK SC, sans-serif" font-size="12" fill="#f818f8">7</text>
<rect x="1368.7" y="407.8" width="1" height="1" fill="#f818f8" opacity="0.85"/>
<text x="1383.0" y="423.0" text-anchor="middle" font-family="Liberation Sans, Noto Sans CJK SC, sans-serif" font-size="12" fill="#f818f8">8</text>
<rect x="1379.4" y="413.0" width="1" height="1" fill="#f818f8" opacity="0.85"/>
<text x="1394.0" y="396.6" text-anchor="middle" font-family="Liberation Sans, Noto Sans CJK SC, sans-serif" font-size="12" fill="#10f010">9</text>
<rect x="1390.4" y="386.6" width="1" height="1" fill="#10f010" opacity="0.85"/>
<text x="31" y="99.8" font-family="Liberation Sans, Noto Sans CJK SC, sans-serif" letter-spacing="0.25" font-size="14" fill="#ffe400"><tspan font-size="13.4">生益电子</tspan></text>
<text x="90.4" y="99.8" font-family="Liberation Sans, Noto Sans CJK SC, sans-serif" letter-spacing="0.25" font-size="14" fill="#e4e4e8">2025/11/28</text>
<text x="168.3" y="99.8" font-family="Liberation Sans, Noto Sans CJK SC, sans-serif" letter-spacing="0.25" font-size="14" fill="#e4e4e8"><tspan font-size="13.4">开</tspan>90.33<tspan font-family="NanumGothic, sans-serif" font-size="11" dy="0.7" dx="1.5" stroke="#e4e4e8" stroke-width="0.45">↓</tspan></text>
<text x="227.4" y="99.8" font-family="Liberation Sans, Noto Sans CJK SC, sans-serif" letter-spacing="0.25" font-size="14" fill="#ff4040"><tspan font-size="13.4">高</tspan>90.93<tspan font-family="NanumGothic, sans-serif" font-size="11" dy="0.7" dx="1.5" stroke="#ff4040" stroke-width="0.45">↓</tspan></text>
<text x="286.4" y="99.8" font-family="Liberation Sans, Noto Sans CJK SC, sans-serif" letter-spacing="0.25" font-size="14" fill="#54dcf4"><tspan font-size="13.4">低</tspan>90.26<tspan font-family="NanumGothic, sans-serif" font-size="11" dy="0.7" dx="1.5" stroke="#54dcf4" stroke-width="0.45">↑</tspan></text>
<text x="345.5" y="99.8" font-family="Liberation Sans, Noto Sans CJK SC, sans-serif" letter-spacing="0.25" font-size="14" fill="#ff4040"><tspan font-size="13.4">收</tspan>90.93<tspan font-family="NanumGothic, sans-serif" font-size="11" dy="0.7" dx="1.5" stroke="#ff4040" stroke-width="0.45">↑</tspan></text>
<text x="404.2" y="99.8" font-family="Liberation Sans, Noto Sans CJK SC, sans-serif" letter-spacing="0.25" font-size="14" fill="#54dcf4"><tspan font-size="13.4">量</tspan>2154<tspan font-family="NanumGothic, sans-serif" font-size="11" dy="0.7" dx="1.5" stroke="#54dcf4" stroke-width="0.45">↓</tspan></text>
<text x="458.8" y="99.8" font-family="Liberation Sans, Noto Sans CJK SC, sans-serif" letter-spacing="0.25" font-size="14" fill="#54dcf4"><tspan font-size="13.4">额</tspan>1948<tspan font-family="NanumGothic, sans-serif" font-size="11" dy="0.7" dx="1.5" stroke="#54dcf4" stroke-width="0.45">↓</tspan></text>
<text x="513.8" y="99.8" font-family="Liberation Sans, Noto Sans CJK SC, sans-serif" letter-spacing="0.25" font-size="14" fill="#e4e4e8"><tspan font-size="13.4">换</tspan>0.03%</text>
<text x="572.3" y="99.8" font-family="Liberation Sans, Noto Sans CJK SC, sans-serif" letter-spacing="0.25" font-size="14" fill="#e4e4e8"><tspan font-size="13.4">振</tspan>0.74%</text>
<text x="631.9" y="99.8" font-family="Liberation Sans, Noto Sans CJK SC, sans-serif" letter-spacing="0.25" font-size="14" fill="#ff4040"><tspan font-size="13.4">涨</tspan>(0.60)0.66%<tspan font-family="NanumGothic, sans-serif" font-size="11" dy="0.7" dx="1.5" stroke="#ff4040" stroke-width="0.45">↑</tspan></text>
<text x="31" y="119.5" font-family="Liberation Sans, Noto Sans CJK SC, sans-serif" letter-spacing="0.25" font-size="14" fill="#e0e0e0"><tspan font-size="13.4">九转序列</tspan></text>
<text x="31" y="674" font-family="Liberation Sans, Noto Sans CJK SC, sans-serif" letter-spacing="0.05" font-size="14" fill="#e4e4e8">MACD(12,26,9)</text>
<text x="139" y="674" font-family="Liberation Sans, Noto Sans CJK SC, sans-serif" letter-spacing="0.05" font-size="14" fill="#e4e4e8">DIFF 0.599<tspan font-family="NanumGothic, sans-serif" font-size="11" dy="0.7" dx="1.5" stroke="#e4e4e8" stroke-width="0.45">↓</tspan></text>
<text x="224" y="674" font-family="Liberation Sans, Noto Sans CJK SC, sans-serif" letter-spacing="0.05" font-size="14" fill="#ffff00">DEA 0.293<tspan font-family="NanumGothic, sans-serif" font-size="11" dy="0.7" dx="1.5" stroke="#ffff00" stroke-width="0.45">↑</tspan></text>
<text x="306" y="674" font-family="Liberation Sans, Noto Sans CJK SC, sans-serif" letter-spacing="0.05" font-size="14" fill="#f010f0">MACD 0.613<tspan font-family="NanumGothic, sans-serif" font-size="11" dy="0.7" dx="1.5" stroke="#f010f0" stroke-width="0.45">↓</tspan></text>
<rect x="183" y="128" width="366.5" height="1.25" fill="#ff00ff"/>
</svg>
<div id="title"><div class="strip"></div>
 <svg style="left:5px;top:0px" width="24" height="24" viewBox="0 0 24 24"><defs><radialGradient id="g" cx="42%" cy="32%" r="72%"><stop offset="0" stop-color="#fdf0bc"/><stop offset="0.6" stop-color="#f0d68c"/><stop offset="1" stop-color="#c9a658"/></radialGradient></defs><circle cx="11.5" cy="11.5" r="10.7" fill="url(#g)"/><g font-family="Liberation Sans, sans-serif" font-weight="bold" font-style="italic" fill="#0c0c0c"><text x="3" y="14.5" font-size="11" textLength="7.5" lengthAdjust="spacingAndGlyphs">K</text><text x="9.8" y="16.8" font-size="12" textLength="9.5" lengthAdjust="spacingAndGlyphs">T</text></g></svg>
 <div style="position:absolute;left:33px;top:4px;font-family:'Liberation Mono','Noto Serif CJK SC',serif;font-size:16px;line-height:18px;color:#fff;white-space:nowrap">交易师经典版<span style="font-size:15px;letter-spacing:-1px">V2.2.0</span></div>
 <div style="position:absolute;left:1109px;top:1px;width:36px;height:10px;background:linear-gradient(#8c8c8c,#6a6a6a);border:1px solid #a0a0a0;box-sizing:content-box;"><div style="position:absolute;left:1px;top:-1px;width:36px;text-align:center;font-size:10px;line-height:12px;font-weight:bold;font-style:italic;color:#383838;letter-spacing:1.6px;text-shadow:0 1px 0 #b4b4b4,1px 0 0 #9a9a9a;transform:scaleX(1.12)">VIP</div></div>
 <div class="menu" style="left:1174px">系统<span>(<u>S</u>)</span></div>
 <div class="menu" style="left:1252px">交易<span>(<u>Q</u>)</span></div>
 <div class="menu" style="left:1330px">查看<span>(<u>L</u>)</span></div>
 <div class="menu" style="left:1408px">画面<span>(<u>P</u>)</span></div>
 <div class="menu" style="left:1486px">工具<span>(<u>T</u>)</span></div>
</div>
<div id="tool"></div>
<!-- toolbar items (window coords) -->
<svg style="left:0;top:23px" width="60" height="31" viewBox="0 0 60 31" fill="none" stroke="#c4c4c8" stroke-width="1.1" stroke-linejoin="round">
 <path d="M1.3 15 L7.8 7.2 L7.8 10.9 L15.6 10.9 L15.6 19 L7.8 19 L7.8 22.7 Z"/>
 <path d="M31.4 16.5 L31.4 8.2 Q31.4 7 32.5 7 Q33.6 7 33.6 8.2 L33.6 13 L33.6 11.8 Q35 11 35.8 12.2 L35.8 13.4 Q37.2 12.6 38 13.8 L38 14.6 Q39.6 14 40.1 15.4 L40.1 19 L38.6 22.8 L31.6 22.8 L26 16.4 Q27.4 14.6 29.2 16 Z"/>
</svg>
<div class="sep" style="left:54px"></div>
<div class="t" style="left:70px">全</div>
<div class="t" style="left:93px">策</div>
<div class="pill" style="left:117px;top:30px;width:16px;height:16px;font-size:13px;line-height:16px;font-weight:bold;border-radius:4px">行</div>
<div class="t" style="left:141px">信</div>
<div class="t" style="left:165px;top:30px;font-family:'Liberation Sans',sans-serif;font-weight:bold;font-size:16px;letter-spacing:-1px;color:#c4c4c4;transform:scaleX(.63);transform-origin:left">F10</div>
<div style="position:absolute;left:190px;top:31px;width:10px;height:10px;background:#9a9a9a"></div>
<div style="position:absolute;left:194px;top:36px;width:10px;height:9px;background:#3fa0ea"></div>
<div class="sep" style="left:218px"></div>
<div class="t" style="left:234px">板块</div>
<div class="t" style="left:273px">自选</div>
<div style="position:absolute;left:308px;top:36px;border:3px solid transparent;border-top:3.5px solid #b4b4b8;border-bottom:none"></div>
<div class="sep" style="left:328px"></div>
<div class="t" style="left:344px">选股</div>
<div class="t" style="left:383px">弹幕</div>
<div class="sep" style="left:428px"></div>
<div class="pill" style="left:441px;top:30px;width:57px;height:16px;font-size:12.5px;line-height:16px">九转序列</div>
<div class="t" style="left:505px;font-size:13.5px">趋势通道</div>
<div class="t" style="left:566px;font-size:14px">星空雷达</div>
<div class="t" style="left:630px;font-size:13.5px">其他</div>
<div style="position:absolute;left:666px;top:36px;border:3px solid transparent;border-top:3.5px solid #b4b4b8;border-bottom:none"></div>
<div class="sep" style="left:684px"></div>
<div class="t" style="left:700px">分时</div>
<div class="n" style="left:741px">1</div>
<div class="n" style="left:766px">5</div>
<div class="n" style="left:785px">15</div>
<div class="n" style="left:809px">30</div>
<div style="position:absolute;left:831px;top:27px;width:22px;height:20px;border:1px solid #3478d0;background:linear-gradient(#3a5582,#2a4368);border-radius:3px"></div>
<div class="n" style="left:835px;color:#d0d0d4">60</div>
<div class="n" style="left:857px">90</div>
<div class="n" style="left:883px">120</div>
<div class="t" style="left:917px">日</div>
<div class="t" style="left:941px">周</div>
<div class="t" style="left:965px">月</div>
<div class="sep" style="left:994px"></div>
<div class="pill" style="left:1010px;top:30px;width:29px;height:16px;font-size:12px;line-height:16px">画线</div>
<div class="sep" style="left:1054px"></div>
</div>
</body></html>
